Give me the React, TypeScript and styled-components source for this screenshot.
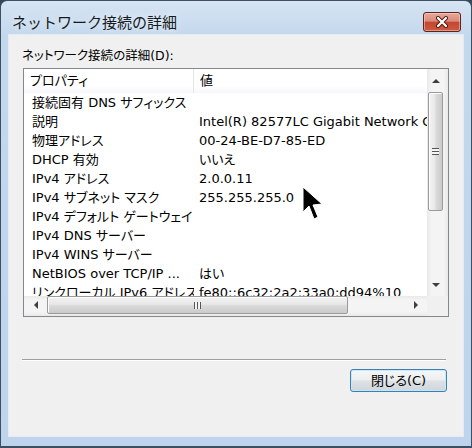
import React from 'react';
import styled, { createGlobalStyle, css } from 'styled-components';

const FONT = `"Noto Sans CJK JP", "Noto Sans", sans-serif`;
const UI_FONT = `"DejaVu Sans", "Noto Sans CJK JP", sans-serif`;

const GlobalStyle = createGlobalStyle`
  * { box-sizing: border-box; }
  html, body { margin: 0; padding: 0; width: 472px; height: 448px; overflow: hidden; background: #34475c; }
  #root { width: 472px; height: 448px; }
`;

const Window = styled.div`
  position: relative;
  width: 472px;
  height: 448px;
  display: flex;
  flex-direction: column;
  border: 1px solid #3d4f63;
  border-bottom-width: 2px;
  border-radius: 7px 7px 0 0;
  background: linear-gradient(180deg, #d6e4f3 0px, #c4d8ed 34px, #bdd4ec 100%);
  font-family: ${FONT};
  color: #000;
  overflow: hidden;
`;

const TitleBar = styled.div`
  flex: none;
  height: 33px;
  display: flex;
  align-items: flex-start;
  justify-content: space-between;
  padding: 11px 10px 0 11px;
`;

const Title = styled.div`
  font-size: 15px;
  line-height: 20px;
  color: #151b22;
  text-shadow: 0 0 8px rgba(255, 255, 255, 0.9);
`;

const CloseButton = styled.div`
  width: 38px;
  height: 20px;
  border: 1px solid #5b241c;
  border-radius: 3px;
  background: linear-gradient(180deg, #e6a89b 0%, #d98b7c 45%, #c5462f 52%, #cc5a40 100%);
  box-shadow: inset 0 0 0 1px rgba(255, 230, 220, 0.45);
  display: flex;
  align-items: center;
  justify-content: center;
`;

const Client = styled.div`
  flex: 1;
  margin: 0 7px 9px 7px;
  background: #f0f0f0;
  border: 1px solid #e3ecf5;
  display: flex;
  flex-direction: column;
  padding: 12px 14px 0 14px;
  font-family: ${UI_FONT};
  font-feature-settings: "palt" 1;
  font-size: 13px;
`;

const GroupLabel = styled.div`
  font-size: 12.5px;
  line-height: 18px;
  margin-left: -1px;
`;

const ListBox = styled.div`
  margin-top: 3px;
  height: 249px;
  border: 1px solid #828790;
  background: #fff;
  display: grid;
  grid-template-columns: minmax(0, 1fr) 21px;
  grid-template-rows: minmax(0, 1fr) 20px;
`;

const Viewport = styled.div`
  overflow: hidden;
`;

const HeaderRow = styled.div`
  display: grid;
  grid-template-columns: 170px 1fr;
  height: 24px;
  background: linear-gradient(180deg, #ffffff 0%, #ffffff 70%, #f6f7f9 100%);
`;

const HeaderCell = styled.div<{ $divider?: boolean }>`
  line-height: 24px;
  padding-left: 6px;
  white-space: nowrap;
  ${(p) =>
    p.$divider &&
    css`
      border-right: 1px solid #e3e5e8;
    `}
`;

const Row = styled.div`
  display: grid;
  grid-template-columns: 170px 1fr;
  height: 19px;
  line-height: 19px;
`;

const NameCell = styled.div`
  padding: 0 3px 0 8px;
  white-space: nowrap;
  overflow: hidden;
`;

const ValueCell = styled.div`
  padding-left: 5px;
  white-space: nowrap;
  overflow: hidden;
`;

const VScroll = styled.div`
  display: flex;
  flex-direction: column;
  background: linear-gradient(90deg, #e9e9e9 0%, #f4f4f4 20%, #f4f4f4 80%, #e9e9e9 100%);
`;

const HScroll = styled.div`
  display: flex;
  flex-direction: row;
  background: linear-gradient(180deg, #e9e9e9 0%, #f4f4f4 20%, #f4f4f4 80%, #e9e9e9 100%);
`;

const Corner = styled.div`
  background: #f0f0f0;
`;

const ArrowButton = styled.div<{ $vertical?: boolean }>`
  flex: none;
  display: flex;
  align-items: center;
  justify-content: center;
  ${(p) =>
    p.$vertical
      ? css`
          height: 23px;
          padding-right: 4px;
        `
      : css`
          width: 23px;
          padding-bottom: 2px;
        `}
`;

const Arrow = styled.div<{ $dir: 'up' | 'down' | 'left' | 'right' }>`
  width: 0;
  height: 0;
  ${(p) => {
    switch (p.$dir) {
      case 'up':
        return css`
          border-left: 4px solid transparent;
          border-right: 4px solid transparent;
          border-bottom: 4px solid #3f3f3f;
        `;
      case 'down':
        return css`
          border-left: 4px solid transparent;
          border-right: 4px solid transparent;
          border-top: 4px solid #3f3f3f;
        `;
      case 'left':
        return css`
          border-top: 4px solid transparent;
          border-bottom: 4px solid transparent;
          border-right: 4px solid #3f3f3f;
        `;
      case 'right':
        return css`
          border-top: 4px solid transparent;
          border-bottom: 4px solid transparent;
          border-left: 4px solid #3f3f3f;
        `;
    }
  }}
`;

const Track = styled.div<{ $vertical?: boolean }>`
  flex: 1;
  display: flex;
  flex-direction: ${(p) => (p.$vertical ? 'column' : 'row')};
`;

const Thumb = styled.div<{ $vertical?: boolean }>`
  display: flex;
  align-items: center;
  justify-content: center;
  border: 1px solid #9a9a9a;
  border-radius: 2px;
  box-shadow: inset 1px 1px 0 #fdfdfd;
  ${(p) =>
    p.$vertical
      ? css`
          margin: 0 5px 0 1px;
          height: 119px;
          background: linear-gradient(90deg, #f3f3f3 0%, #e8e8e8 45%, #d9d9d9 55%, #cbcbcb 100%);
        `
      : css`
          margin: 0 0 2px 0;
          width: 301px;
          background: linear-gradient(180deg, #f3f3f3 0%, #e8e8e8 45%, #d9d9d9 55%, #cbcbcb 100%);
        `}
`;

const Grip = styled.div<{ $vertical?: boolean }>`
  ${(p) =>
    p.$vertical
      ? css`
          width: 7px;
          height: 7px;
          background: repeating-linear-gradient(180deg, #555 0px, #555 1px, #f4f4f4 1px, #f4f4f4 3px);
        `
      : css`
          width: 7px;
          height: 7px;
          background: repeating-linear-gradient(90deg, #555 0px, #555 1px, #f4f4f4 1px, #f4f4f4 3px);
        `}
`;

const Separator = styled.div`
  margin: 42px 3px 0 -1px;
  height: 2px;
  border-top: 1px solid #a0a0a0;
  border-bottom: 1px solid #ffffff;
`;

const PushButton = styled.button`
  align-self: flex-end;
  margin: 8px 2px 0 0;
  width: 97px;
  height: 23px;
  padding: 0;
  border: 1px solid #3c7fb1;
  border-radius: 3px;
  background: linear-gradient(180deg, #f4f6f8 0%, #eceef0 48%, #dde2e6 52%, #cfd6dc 100%);
  box-shadow: inset 0 0 0 1px rgba(200, 232, 250, 0.9);
  font-family: ${UI_FONT};
  font-feature-settings: "palt" 1;
  font-size: 13px;
  color: #000;
  line-height: 21px;
`;

const CursorLayer = styled.svg`
  position: absolute;
  left: 301px;
  top: 185px;
  pointer-events: none;
`;

const rows: [string, string][] = [
  ['接続固有 DNS サフィックス', ''],
  ['説明', 'Intel(R) 82577LC Gigabit Network Connection'],
  ['物理アドレス', '00-24-BE-D7-85-ED'],
  ['DHCP 有効', 'いいえ'],
  ['IPv4 アドレス', '2.0.0.11'],
  ['IPv4 サブネット マスク', '255.255.255.0'],
  ['IPv4 デフォルト ゲートウェイ', ''],
  ['IPv4 DNS サーバー', ''],
  ['IPv4 WINS サーバー', ''],
  ['NetBIOS over TCP/IP ...', 'はい'],
  ['リンクローカル IPv6 アドレス', 'fe80::6c32:2a2:33a0:dd94%10'],
];

export default function App() {
  return (
    <>
      <GlobalStyle />
      <Window>
        <TitleBar>
          <Title>ネットワーク接続の詳細</Title>
          <CloseButton>
            <svg width="14" height="12" viewBox="0 0 14 12">
              <path d="M3 2 L11 10 M11 2 L3 10" stroke="#4a1a12" strokeWidth="4" strokeLinecap="round" />
              <path d="M3 2 L11 10 M11 2 L3 10" stroke="#ffffff" strokeWidth="2.2" strokeLinecap="round" />
            </svg>
          </CloseButton>
        </TitleBar>
        <Client>
          <GroupLabel>ネットワーク接続の詳細(D):</GroupLabel>
          <ListBox>
            <Viewport>
              <HeaderRow>
                <HeaderCell $divider>プロパティ</HeaderCell>
                <HeaderCell>値</HeaderCell>
              </HeaderRow>
              {rows.map(([name, value]) => (
                <Row key={name}>
                  <NameCell>{name}</NameCell>
                  <ValueCell>{value}</ValueCell>
                </Row>
              ))}
            </Viewport>
            <VScroll>
              <ArrowButton $vertical>
                <Arrow $dir="up" />
              </ArrowButton>
              <Track $vertical>
                <Thumb $vertical>
                  <Grip $vertical />
                </Thumb>
              </Track>
              <ArrowButton $vertical>
                <Arrow $dir="down" />
              </ArrowButton>
            </VScroll>
            <HScroll>
              <ArrowButton>
                <Arrow $dir="left" />
              </ArrowButton>
              <Track>
                <Thumb>
                  <Grip />
                </Thumb>
              </Track>
              <ArrowButton>
                <Arrow $dir="right" />
              </ArrowButton>
            </HScroll>
            <Corner />
          </ListBox>
          <Separator />
          <PushButton>閉じる(C)</PushButton>
        </Client>
        <CursorLayer width="22" height="36" viewBox="0 0 22 36">
          <path
            d="M1 1 L1 26 L7 20 L12 33 L16 31 L11 19 L20 18 Z"
            fill="#000"
            stroke="#fff"
            strokeWidth="1"
            strokeLinejoin="round"
          />
        </CursorLayer>
      </Window>
    </>
  );
}
